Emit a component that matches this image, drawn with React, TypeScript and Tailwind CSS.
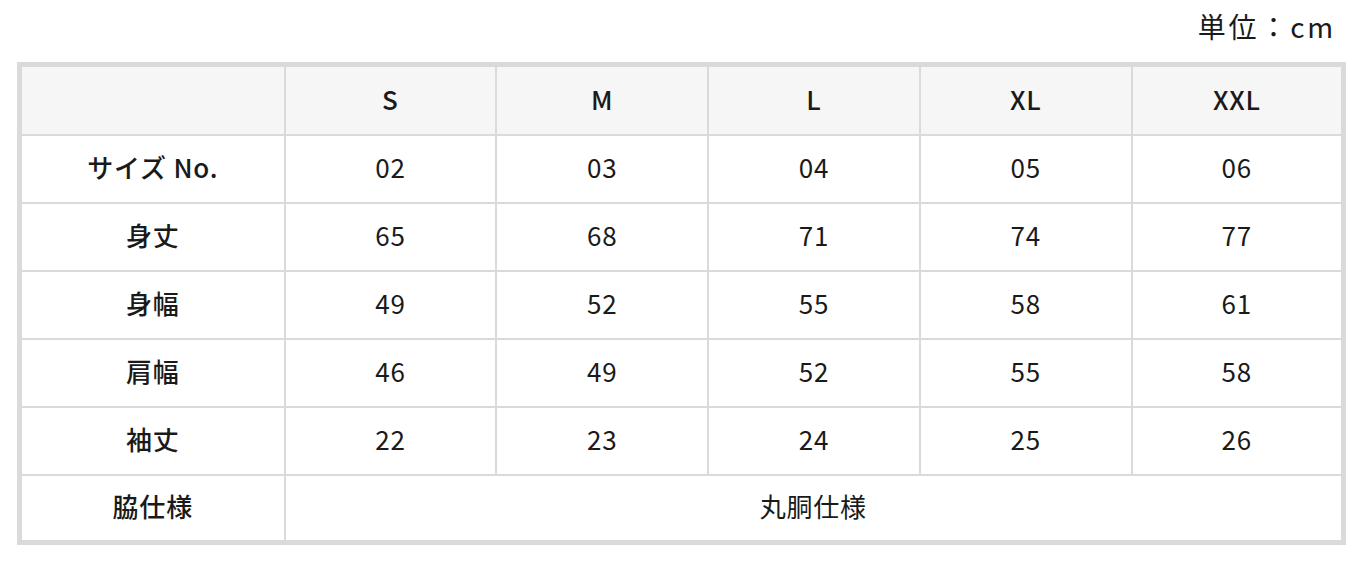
const sizes = ["S", "M", "L", "XL", "XXL"];

const rows: { label: string; values: string[] }[] = [
  { label: "サイズ No.", values: ["02", "03", "04", "05", "06"] },
  { label: "身丈", values: ["65", "68", "71", "74", "77"] },
  { label: "身幅", values: ["49", "52", "55", "58", "61"] },
  { label: "肩幅", values: ["46", "49", "52", "55", "58"] },
  { label: "袖丈", values: ["22", "23", "24", "25", "26"] },
];

const cell =
  "border-2 border-[#dadada] h-[68px] pb-[3px] text-center align-middle leading-none";

const App = () => {
  return (
    <div
      className="pl-[17px] pr-[16px] text-[#1a1a1a] tracking-[0.05em]"
      style={{ fontFamily: '"Noto Sans CJK JP", sans-serif' }}
    >
      {/* Unit label */}
      <div className="h-[62px] flex items-center justify-end pr-[10px] pb-[10px]">
        <span className="text-[28px] tracking-[0.1em]">単位：cm</span>
      </div>

      <table className="w-full table-fixed border-collapse border-[5px] border-[#dadada] text-[26px]">
        <thead>
          <tr className="bg-[#f6f6f6]">
            <th className={`${cell} w-[265px] h-[70px]`}></th>
            {sizes.map((s) => (
              <th key={s} className={`${cell} h-[70px] font-medium`}>
                {s}
              </th>
            ))}
          </tr>
        </thead>
        <tbody>
          {rows.map((row) => (
            <tr key={row.label}>
              <td className={`${cell} font-medium`}>{row.label}</td>
              {row.values.map((v, i) => (
                <td key={i} className={`${cell} font-normal`}>
                  {v}
                </td>
              ))}
            </tr>
          ))}
          <tr>
            <td className={`${cell} font-medium`}>脇仕様</td>
            <td colSpan={5} className={cell}>
              丸胴仕様
            </td>
          </tr>
        </tbody>
      </table>
    </div>
  );
};

export default App;
